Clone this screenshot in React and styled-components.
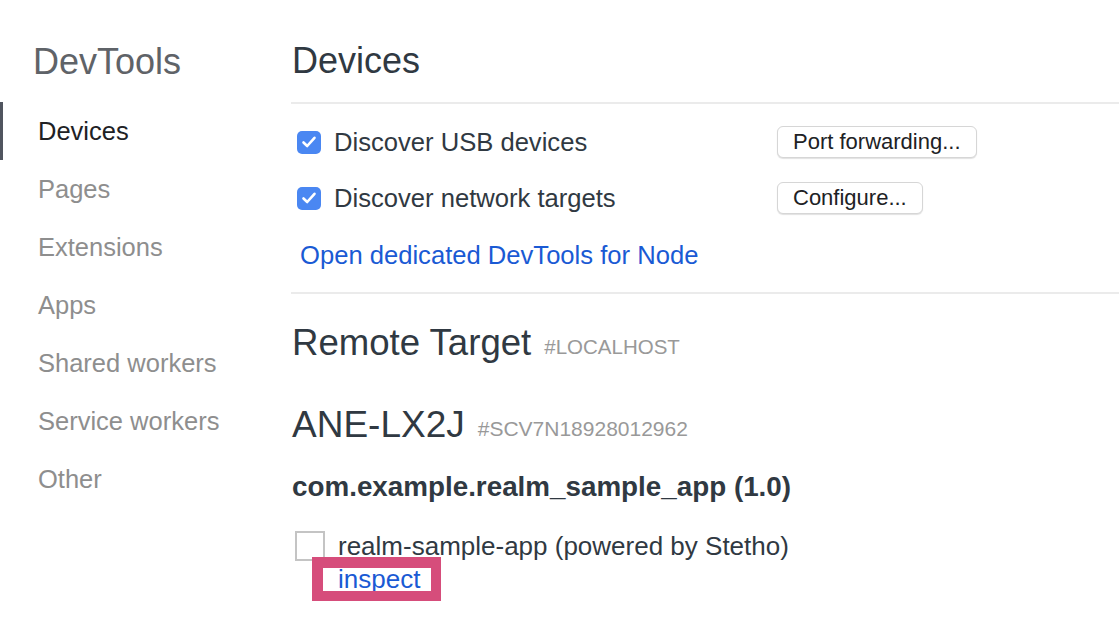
import React from "react";
import styled, { createGlobalStyle } from "styled-components";

const Global = createGlobalStyle`
  html, body { margin: 0; padding: 0; background: #fff; }
  body { font-family: "Liberation Sans", Arial, sans-serif; color: #303942; }
  * { box-sizing: border-box; }
`;

const Page = styled.div`
  display: flex;
  width: 1119px;
  height: 629px;
  overflow: hidden;
`;

const Sidebar = styled.nav`
  width: 291px;
  flex: none;
  display: flex;
  flex-direction: column;
`;

const Brand = styled.div`
  height: 102px;
  padding-left: 33px;
  padding-top: 22px;
  display: flex;
  align-items: center;
  font-size: 36px;
  color: #5f6368;
`;

const NavItem = styled.div`
  height: 58px;
  display: flex;
  align-items: center;
  padding-left: 35px;
  font-size: 25.5px;
  color: ${(p) => (p.$active ? "#202124" : "#8e8e8e")};
  border-left: 3px solid ${(p) => (p.$active ? "#50555f" : "transparent")};
`;

const Main = styled.main`
  flex: 1;
  display: flex;
  flex-direction: column;
`;

const PageTitle = styled.h1`
  margin: 0;
  height: 104px;
  padding-left: 1px;
  padding-top: 20px;
  display: flex;
  align-items: center;
  font-size: 36px;
  font-weight: normal;
  color: #303942;
  border-bottom: 2px solid #ebebeb;
`;

const Settings = styled.section`
  padding: 10px 0 8px;
  border-bottom: 2px solid #ebebeb;
`;

const SettingRow = styled.div`
  height: 56px;
  display: flex;
  align-items: center;
`;

const CheckLabel = styled.label`
  width: 486px;
  display: flex;
  align-items: center;
  gap: 13px;
  padding-left: 6px;
  font-size: 25.6px;
  color: #303942;
`;

const CheckBox = styled.span`
  width: 24px;
  height: 23px;
  border-radius: 5px;
  background: #4a87f2;
  display: flex;
  align-items: center;
  justify-content: center;
  flex: none;
`;

const Button = styled.button`
  height: 32px;
  padding: 0 15px;
  font-family: "Liberation Sans", Arial, sans-serif;
  font-size: 22px;
  color: #202124;
  background: #fff;
  border: 1px solid #d6d6d6;
  border-radius: 6px;
  box-shadow: 0 1px 1px rgba(0, 0, 0, 0.12);
`;

const LinkRow = styled.div`
  height: 58px;
  display: flex;
  align-items: center;
  padding-left: 9px;
`;

const Link = styled.a`
  font-size: ${(p) => p.$size || "25.6px"};
  color: #1a5ad4;
  text-decoration: none;
`;

const Targets = styled.section`
  padding-top: 24px;
`;

const SectionTitle = styled.h2`
  margin: 0 0 ${(p) => p.$mb || "0"};
  height: 50px;
  display: flex;
  align-items: center;
  gap: 13px;
  padding-left: 1px;
  font-size: ${(p) => p.$size || "36.6px"};
  font-weight: normal;
  color: #303942;
`;

const Hash = styled.span`
  font-size: ${(p) => p.$size || "20.5px"};
  color: #999;
  padding-top: 8px;
`;

const AppName = styled.div`
  margin-top: 19px;
  height: 36px;
  line-height: 36px;
  padding-left: 1px;
  font-size: 27.8px;
  font-weight: bold;
  color: #303942;
`;

const TargetRow = styled.div`
  margin-top: 26px;
  display: flex;
  gap: 13px;
  padding-left: 4px;
`;

const Thumb = styled.div`
  width: 30px;
  height: 30px;
  border: 2px solid #c4c4c4;
  flex: none;
`;

const TargetInfo = styled.div`
  display: flex;
  flex-direction: column;
`;

const TargetName = styled.div`
  height: 30px;
  line-height: 30px;
  font-size: 26px;
  color: #303942;
`;

const Actions = styled.div`
  margin-top: 6px;
  height: 24px;
  line-height: 24px;
  position: relative;
`;

const Highlight = styled.span`
  position: absolute;
  left: -26px;
  top: -10px;
  width: 129px;
  height: 44px;
  border: 11px solid #d64d7b;
  border-right-width: 10px;
  border-bottom-width: 10px;
  pointer-events: none;
`;

const Check = () => (
  <svg width="16" height="14" viewBox="0 0 16 14">
    <path d="M2.5 7.5 L6.2 11 L13.5 2.8" fill="none" stroke="#fff" strokeWidth="2.6" strokeLinecap="round" strokeLinejoin="round" />
  </svg>
);

const navItems = ["Devices", "Pages", "Extensions", "Apps", "Shared workers", "Service workers", "Other"];

export default function App() {
  return (
    <>
      <Global />
      <Page>
        <Sidebar>
          <Brand>DevTools</Brand>
          {navItems.map((n, i) => (
            <NavItem key={n} $active={i === 0}>{n}</NavItem>
          ))}
        </Sidebar>
        <Main>
          <PageTitle>Devices</PageTitle>
          <Settings>
            <SettingRow>
              <CheckLabel><CheckBox><Check /></CheckBox>Discover USB devices</CheckLabel>
              <Button>Port forwarding...</Button>
            </SettingRow>
            <SettingRow>
              <CheckLabel><CheckBox><Check /></CheckBox>Discover network targets</CheckLabel>
              <Button>Configure...</Button>
            </SettingRow>
            <LinkRow>
              <Link href="#">Open dedicated DevTools for Node</Link>
            </LinkRow>
          </Settings>
          <Targets>
            <SectionTitle $mb="32px">Remote Target <Hash>#LOCALHOST</Hash></SectionTitle>
            <SectionTitle $size="37px">ANE-LX2J <Hash $size="21px">#SCV7N18928012962</Hash></SectionTitle>
            <AppName>com.example.realm_sample_app (1.0)</AppName>
            <TargetRow>
              <Thumb />
              <TargetInfo>
                <TargetName>realm-sample-app (powered by Stetho)</TargetName>
                <Actions>
                  <Link href="#" $size="26px">inspect</Link>
                  <Highlight />
                </Actions>
              </TargetInfo>
            </TargetRow>
          </Targets>
        </Main>
      </Page>
    </>
  );
}
